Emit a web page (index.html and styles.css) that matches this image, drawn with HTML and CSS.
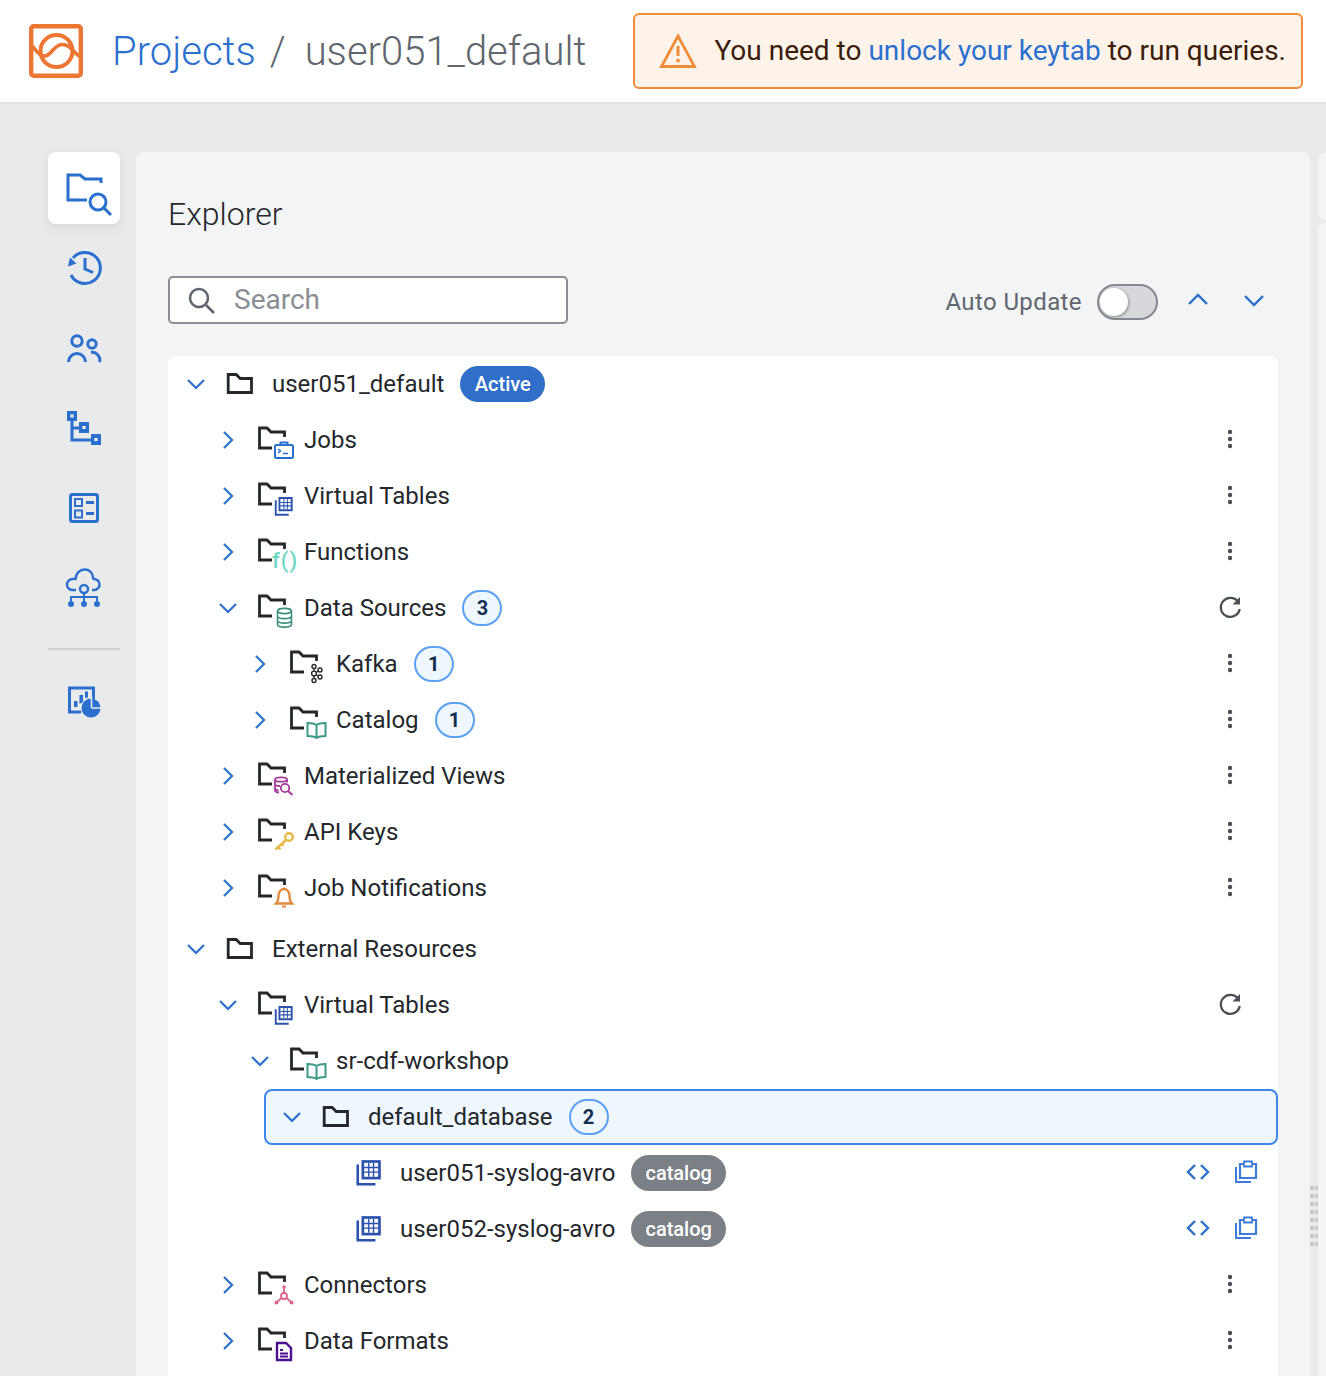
FILE: index.html
```html
<!DOCTYPE html>
<html lang="en">
<head>
  <meta charset="UTF-8">
  <title>Projects / user051_default</title>
  <link rel="stylesheet" href="styles.css">
</head>
<body>
  <!-- shared icons -->
  <svg class="sprite" width="0" height="0">
    <symbol id="chev-right" viewBox="0 0 24 24"><path d="M8 4l8 8-8 8"/></symbol>
    <symbol id="chev-down" viewBox="0 0 24 24"><path d="M4 8l8 8 8-8"/></symbol>
    <symbol id="folder" viewBox="0 0 32 32"><path d="M4.200 6.500h8l4 4h11.300v14H4.200z"/></symbol>
    <symbol id="folder-open" viewBox="0 0 40 40"><path d="M28.500 17v-5H15l-4-4H3.500v20H16" fill="none" stroke="#24282c" stroke-width="2.800"/></symbol>
    <symbol id="kebab" viewBox="0 0 32 32"><circle cx="16" cy="9" r="2.200"/><circle cx="16" cy="16" r="2.200"/><circle cx="16" cy="23" r="2.200"/></symbol>
    <symbol id="refresh" viewBox="0 0 32 32"><path d="M24.500 11.500a9.500 9.500 0 1 0 1.200 6.500" fill="none" stroke="#4a4f55" stroke-width="2.300"/><path d="M26 6v7.500h-7.500z" fill="#4a4f55"/></symbol>
    <symbol id="table" viewBox="0 0 28 28">
      <path d="M3.500 6v18.500H20" fill="none" stroke="#2a52ad" stroke-width="2.400"/>
      <path d="M7 2h18v18H7z" fill="#2a52ad"/>
      <path d="M9.500 4.500h13v13h-13z" fill="#fff"/>
      <path d="M13.800 4.500v13M18.200 4.500v13M9.500 8.800h13M9.500 13.200h13" stroke="#2a52ad" stroke-width="1.300"/>
    </symbol>
    <symbol id="book" viewBox="0 0 40 40">
      <path d="M28.500 25c-2-1.500-5-2-9-2v13c4 0 7 .5 9 2 2-1.500 5-2 9-2V23c-4 0-7 .5-9 2zM28.500 25v13" fill="none" stroke="#3d9a8b" stroke-width="2"/>
    </symbol>
    <symbol id="code" viewBox="0 0 24 24"><path d="M9 5l-7 7 7 7M15 5l7 7-7 7" fill="none" stroke="#2b6fcf" stroke-width="2.400"/></symbol>
    <symbol id="clip" viewBox="0 0 24 24">
      <path d="M2 7v15h15" fill="none" stroke="#3b7dd8" stroke-width="2"/>
      <path d="M10 4H6v14h16V4h-4" fill="none" stroke="#3b7dd8" stroke-width="2.200"/>
      <path d="M10 1.500h8v5h-8z" fill="none" stroke="#3b7dd8" stroke-width="1.800"/>
    </symbol>
  </svg>

  <!-- Header -->
  <header class="top-bar">
    <svg class="logo" width="54" height="54" viewBox="0 0 54 54">
      <rect x="2.200" y="2.200" width="49.600" height="49.600" rx="2.500" fill="none" stroke="#ec7632" stroke-width="4.400"/>
      <circle cx="27.500" cy="27" r="16" fill="none" stroke="#ec7632" stroke-width="4"/>
      <path d="M2.500 21.500C6 24 8 31 15 32c7 1 9-11 18-11.500 9-.5 12 9.500 19 12.500" fill="none" stroke="#ec7632" stroke-width="3.600"/>
    </svg>
    <div class="crumbs">
      <a href="#" class="crumb-link">Projects</a>
      <span class="crumb-sep">/</span>
      <span class="crumb-current">user051_default</span>
    </div>
    <div class="alert">
      <svg width="38" height="36" viewBox="0 0 38 36">
        <path d="M19 3L2.500 33.500h33z" fill="none" stroke="#ef8c38" stroke-width="2.800"/>
        <path d="M17.500 13h3v10h-3z" fill="#ef8c38"/>
        <circle cx="19" cy="27.500" r="1.900" fill="#ef8c38"/>
      </svg>
      <span class="alert-text">You need to <a href="#">unlock your keytab</a> to run queries.</span>
    </div>
  </header>

  <div class="main">
    <!-- Sidebar -->
    <nav class="side-nav">
      <a href="#" class="nav-item active">
        <svg width="48" height="48" viewBox="-4 -4 48 48" class="nav-svg">
          <path d="M37 15v-4H21l-5-4H4v25h19"/>
          <circle cx="34" cy="34" r="8"/>
          <path d="M40 40l7 7"/>
        </svg>
      </a>
      <a href="#" class="nav-item">
        <svg width="40" height="40" viewBox="0 0 40 40" class="nav-svg">
          <path d="M9 10A15.500 15.500 0 1 1 7 27"/>
          <path d="M21 10v11l8 3.500"/>
          <path d="M4 18.500l8.500-3-6.500-6z" class="fill no-stroke"/>
        </svg>
      </a>
      <a href="#" class="nav-item">
        <svg width="40" height="40" viewBox="0 0 40 40" class="nav-svg">
          <circle cx="13" cy="13" r="5.200"/>
          <path d="M4.500 34a8.500 8.500 0 0 1 17 0"/>
          <circle cx="28" cy="16" r="4.200"/>
          <path d="M27 24.500a7.500 7.500 0 0 1 8.500 9.500"/>
        </svg>
      </a>
      <a href="#" class="nav-item">
        <svg width="40" height="40" viewBox="0 0 40 40" class="nav-svg">
          <path d="M8 8v24h20M8 20h10"/>
          <path d="M3 3h10v10H3zM15 14h10v11H15zM27 26h10v11H27z" class="fill no-stroke"/>
          <path d="M6.500 6.500h3v3h-3zM18.500 18h3v3h-3zM30.500 30h3v3h-3z" class="hole"/>
        </svg>
      </a>
      <a href="#" class="nav-item">
        <svg width="40" height="40" viewBox="0 0 40 40" class="nav-svg">
          <rect x="6.500" y="6.500" width="27" height="27" rx="2"/>
          <path d="M11 11h7v7h-7zM11 22.500h7v7h-7z" class="thin"/>
          <path d="M22 14.500h8M22 25.500h8"/>
        </svg>
      </a>
      <a href="#" class="nav-item">
        <svg width="40" height="40" viewBox="0 0 40 40" class="nav-svg thin-all">
          <path d="M12 22H9a5.500 5.500 0 0 1-1-11c1-.2 2-.2 3.500 0C12 4 17 1.500 21 1.500c4 0 7.500 3 8 8 .2 1 .2 1.500 .5 1.500a5.500 5.500 0 0 1 1 11H28"/>
          <circle cx="20" cy="21" r="4"/>
          <path d="M7 36v-7h26v7M20 25v11" class="thin"/>
          <circle cx="7" cy="36" r="3" class="fill no-stroke"/>
          <circle cx="20" cy="36" r="3" class="fill no-stroke"/>
          <circle cx="33" cy="36" r="3" class="fill no-stroke"/>
        </svg>
      </a>
      <hr class="nav-divider">
      <a href="#" class="nav-item">
        <svg width="40" height="40" viewBox="0 0 40 40" class="nav-svg">
          <path d="M17 32H5.500V8h24v11"/>
          <path d="M10 27v-6h3.500v6zM15.500 24v-9H19v7zM21 18v-6.500h3v6z" class="fill no-stroke"/>
          <circle cx="27" cy="28" r="9.500" class="fill no-stroke"/>
          <path d="M27.500 28v-11.500M27.500 28h11" class="knock"/>
        </svg>
      </a>
    </nav>

    <!-- Explorer -->
    <section class="panel">
      <h1 class="panel-title">Explorer</h1>
      <div class="toolbar">
        <label class="search">
          <svg width="32" height="32" viewBox="0 0 32 32"><circle cx="14" cy="14" r="9"/><path d="M21 21l8 8"/></svg>
          <input type="text" placeholder="Search">
        </label>
        <span class="auto-label">Auto Update</span>
        <span class="toggle"><span class="knob"></span></span>
        <svg class="tool-arrow" width="24" height="24"><path d="M3 16l9-9 9 9"/></svg>
        <svg class="tool-arrow" width="24" height="24"><path d="M3 8l9 9 9-9"/></svg>
      </div>

      <div class="tree">
        <div class="row lv0">
          <svg class="chev"><use href="#chev-down"/></svg>
          <svg class="folder"><use href="#folder"/></svg>
          <span class="name">user051_default</span>
          <span class="pill active-pill">Active</span>
        </div>

        <div class="row lv1">
          <svg class="chev"><use href="#chev-right"/></svg>
          <svg class="sub" viewBox="0 0 40 40"><use href="#folder-open"/>
            <rect x="19" y="25" width="18" height="13" rx="1.500" fill="none" stroke="#2b6fcf" stroke-width="2"/>
            <path d="M24.500 25v-2.500h7V25" fill="none" stroke="#2b6fcf" stroke-width="2"/>
            <path d="M22 29l2.500 2-2.500 2M27 33.500h5" fill="none" stroke="#2b6fcf" stroke-width="1.500"/>
          </svg>
          <span class="name">Jobs</span>
          <span class="act"><svg class="act-icon"><use href="#kebab"/></svg></span>
        </div>

        <div class="row lv1">
          <svg class="chev"><use href="#chev-right"/></svg>
          <svg class="sub" viewBox="0 0 40 40"><use href="#folder-open"/><use href="#table" x="17" y="19.500" width="22" height="22"/></svg>
          <span class="name">Virtual Tables</span>
          <span class="act"><svg class="act-icon"><use href="#kebab"/></svg></span>
        </div>

        <div class="row lv1">
          <svg class="chev"><use href="#chev-right"/></svg>
          <svg class="sub" viewBox="0 0 40 40"><use href="#folder-open"/>
            <text x="16" y="36" class="fn-text">f()</text>
          </svg>
          <span class="name">Functions</span>
          <span class="act"><svg class="act-icon"><use href="#kebab"/></svg></span>
        </div>

        <div class="row lv1">
          <svg class="chev"><use href="#chev-down"/></svg>
          <svg class="sub" viewBox="0 0 40 40"><use href="#folder-open"/>
            <g fill="none" stroke="#3d8f7f" stroke-width="1.600">
              <ellipse cx="28.500" cy="23" rx="7" ry="2.600"/>
              <path d="M21.500 23v13.500c0 1.500 3 2.600 7 2.600s7-1.100 7-2.600V23M21.500 28c0 1.500 3 2.600 7 2.600s7-1.100 7-2.600M21.500 32.500c0 1.500 3 2.600 7 2.600s7-1.100 7-2.600"/>
            </g>
          </svg>
          <span class="name">Data Sources</span>
          <span class="count">3</span>
          <span class="act"><svg class="act-icon"><use href="#refresh"/></svg></span>
        </div>

        <div class="row lv2">
          <svg class="chev"><use href="#chev-right"/></svg>
          <svg class="sub" viewBox="0 0 40 40"><use href="#folder-open"/>
            <g fill="none" stroke="#24282c" stroke-width="1.400">
              <circle cx="26" cy="22.500" r="2"/>
              <circle cx="26" cy="29.500" r="2.400"/>
              <circle cx="26" cy="36.500" r="2"/>
              <circle cx="32" cy="26" r="2"/>
              <circle cx="32" cy="33" r="2"/>
              <path d="M28 28.500l2.300-1.500M28 30.500l2.300 1.500M26 24.500v2.500M26 32v2.500"/>
            </g>
          </svg>
          <span class="name">Kafka</span>
          <span class="count">1</span>
          <span class="act"><svg class="act-icon"><use href="#kebab"/></svg></span>
        </div>

        <div class="row lv2">
          <svg class="chev"><use href="#chev-right"/></svg>
          <svg class="sub" viewBox="0 0 40 40"><use href="#folder-open"/><use href="#book"/></svg>
          <span class="name">Catalog</span>
          <span class="count">1</span>
          <span class="act"><svg class="act-icon"><use href="#kebab"/></svg></span>
        </div>

        <div class="row lv1">
          <svg class="chev"><use href="#chev-right"/></svg>
          <svg class="sub" viewBox="0 0 40 40"><use href="#folder-open"/>
            <g fill="none" stroke="#a3399b" stroke-width="1.800">
              <ellipse cx="25" cy="23.500" rx="6" ry="2.200"/>
              <path d="M19 23.500v11c0 1 1.500 1.800 4 2M19 28c0 1 2 2 5 2M19 32.500c0 1 1.500 1.500 3.500 1.700M31 23.500v3"/>
              <circle cx="29" cy="32" r="4.200"/>
              <path d="M32 35l4.500 4" stroke-width="2"/>
            </g>
          </svg>
          <span class="name">Materialized Views</span>
          <span class="act"><svg class="act-icon"><use href="#kebab"/></svg></span>
        </div>

        <div class="row lv1">
          <svg class="chev"><use href="#chev-right"/></svg>
          <svg class="sub" viewBox="0 0 40 40"><use href="#folder-open"/>
            <g fill="none" stroke="#e8b84a" stroke-width="2.400">
              <circle cx="33" cy="25" r="3.800"/>
              <path d="M30 28L19.500 37.500M21.500 34.500l3 3M25 31.500l2.500 2.500"/>
            </g>
          </svg>
          <span class="name">API Keys</span>
          <span class="act"><svg class="act-icon"><use href="#kebab"/></svg></span>
        </div>

        <div class="row lv1">
          <svg class="chev"><use href="#chev-right"/></svg>
          <svg class="sub" viewBox="0 0 40 40"><use href="#folder-open"/>
            <path d="M20 35.500c2-2 2.500-4 2.500-8a5.500 6.500 0 0 1 11 0c0 4 .5 6 2.500 8zM28 21v-1.500" fill="none" stroke="#e08a3e" stroke-width="2.400"/>
            <path d="M26 37.500h4v2h-4z" fill="#e08a3e"/>
          </svg>
          <span class="name">Job Notifications</span>
          <span class="act"><svg class="act-icon"><use href="#kebab"/></svg></span>
        </div>

        <div class="row lv0 group-start">
          <svg class="chev"><use href="#chev-down"/></svg>
          <svg class="folder"><use href="#folder"/></svg>
          <span class="name">External Resources</span>
        </div>

        <div class="row lv1">
          <svg class="chev"><use href="#chev-down"/></svg>
          <svg class="sub" viewBox="0 0 40 40"><use href="#folder-open"/><use href="#table" x="17" y="19.500" width="22" height="22"/></svg>
          <span class="name">Virtual Tables</span>
          <span class="act"><svg class="act-icon"><use href="#refresh"/></svg></span>
        </div>

        <div class="row lv2">
          <svg class="chev"><use href="#chev-down"/></svg>
          <svg class="sub" viewBox="0 0 40 40"><use href="#folder-open"/><use href="#book"/></svg>
          <span class="name">sr-cdf-workshop</span>
        </div>

        <div class="row lv3 selected">
          <svg class="chev"><use href="#chev-down"/></svg>
          <svg class="folder"><use href="#folder"/></svg>
          <span class="name">default_database</span>
          <span class="count">2</span>
        </div>

        <div class="row lv4">
          <svg class="table-icon"><use href="#table"/></svg>
          <span class="name">user051-syslog-avro</span>
          <span class="pill tag-pill">catalog</span>
          <span class="act leaf-act">
            <svg class="leaf-icon"><use href="#code"/></svg>
            <svg class="leaf-icon"><use href="#clip"/></svg>
          </span>
        </div>

        <div class="row lv4">
          <svg class="table-icon"><use href="#table"/></svg>
          <span class="name">user052-syslog-avro</span>
          <span class="pill tag-pill">catalog</span>
          <span class="act leaf-act">
            <svg class="leaf-icon"><use href="#code"/></svg>
            <svg class="leaf-icon"><use href="#clip"/></svg>
          </span>
        </div>

        <div class="row lv1">
          <svg class="chev"><use href="#chev-right"/></svg>
          <svg class="sub" viewBox="0 0 40 40"><use href="#folder-open"/>
            <g fill="none" stroke="#d9668f" stroke-width="1.800">
              <circle cx="28" cy="31" r="3"/>
              <path d="M28 28v-6M25.500 33L21 37M30.500 33l4.500 4"/>
            </g>
            <g fill="#d9668f"><circle cx="28" cy="22" r="1.800"/><circle cx="20.500" cy="37.500" r="2"/><circle cx="35.500" cy="37.500" r="2"/></g>
          </svg>
          <span class="name">Connectors</span>
          <span class="act"><svg class="act-icon"><use href="#kebab"/></svg></span>
        </div>

        <div class="row lv1">
          <svg class="chev"><use href="#chev-right"/></svg>
          <svg class="sub" viewBox="0 0 40 40"><use href="#folder-open"/>
            <path d="M21 22h9l5 5v12H21z" fill="none" stroke="#4b0f8f" stroke-width="2.400"/>
            <path d="M24 29h3M24 32.500h8M24 35.500h8" stroke="#4b0f8f" stroke-width="1.800"/>
          </svg>
          <span class="name">Data Formats</span>
          <span class="act"><svg class="act-icon"><use href="#kebab"/></svg></span>
        </div>
      </div>
    </section>

    <div class="handle"><div class="handle-dots"></div></div>

    <!-- Side column, cut off by the window -->
    <aside class="right-col">
      <div class="right-card small"></div>
      <div class="right-card"></div>
    </aside>
  </div>
</body>
</html>
```

FILE: styles.css
```css
* {
  margin: 0;
  padding: 0;
  box-sizing: border-box;
}

html, body {
  height: 100%;
  overflow: hidden;
}

body {
  display: flex;
  flex-direction: column;
  font-family: 'Roboto', sans-serif;
  background-color: #e9eaec;
  color: #24282c;
}

a {
  text-decoration: none;
}

.sprite {
  position: absolute;
}

/* Header */
.top-bar {
  display: flex;
  align-items: center;
  flex: 0 0 102px;
  padding: 0 23px 0 29px;
  background-color: #fff;
  box-shadow: 0 1px 3px rgba(0, 0, 0, 0.08);
  z-index: 2;
}

.logo {
  flex: none;
}

.crumbs {
  display: flex;
  align-items: baseline;
  margin-left: 29px;
  font-size: 40px;
  font-weight: 300;
  white-space: nowrap;
}

.crumb-link {
  color: #2b6fcf;
}

.crumb-sep {
  margin: 0 19px 0 14px;
  color: #5f666d;
}

.crumb-current {
  color: #5f666d;
}

.alert {
  display: flex;
  align-items: center;
  gap: 17px;
  height: 76px;
  margin-left: auto;
  padding: 0 15px 0 24px;
  background-color: #fdf3e8;
  border: 2px solid #ef8c38;
  border-radius: 6px;
  font-size: 28px;
  color: #3a1d0a;
  white-space: nowrap;
}

.alert svg {
  flex: none;
}

.alert-text {
  margin-bottom: 2px;
}

.alert a {
  color: #2b6fcf;
}

/* Layout */
.main {
  display: flex;
  flex: 1;
  min-height: 0;
  padding: 50px 0 0 48px;
}

/* Sidebar */
.side-nav {
  display: flex;
  flex-direction: column;
  flex: 0 0 72px;
  gap: 8px;
  margin-right: 16px;
}

.nav-item {
  display: flex;
  align-items: center;
  justify-content: center;
  flex: 0 0 72px;
}

.nav-item.active {
  background-color: #fff;
  border-radius: 8px;
  box-shadow: 0 4px 12px rgba(0, 0, 0, 0.08);
}

.nav-svg {
  overflow: visible;
  fill: none;
  stroke: #2b6fcf;
  stroke-width: 3;
}

.nav-svg .fill {
  fill: #2b6fcf;
}

.nav-svg .no-stroke {
  stroke: none;
}

.nav-svg .hole {
  fill: #fff;
  stroke: none;
}

.nav-svg .thin {
  stroke-width: 2;
}

.nav-svg .knock {
  stroke: #e9eaec;
  stroke-width: 1.5;
}

.thin-all {
  stroke-width: 2.400;
}

.nav-divider {
  flex: none;
  height: 2px;
  margin: 16px 0 6px;
  border: none;
  background-color: #cfd0d3;
}

/* Explorer panel */
.panel {
  flex: 0 0 1174px;
  padding: 0 32px;
  background-color: #f3f4f6;
  border-radius: 8px 8px 0 0;
  overflow: hidden;
}

.panel-title {
  margin-top: 43px;
  font-size: 32px;
  line-height: 38px;
  font-weight: 300;
  color: #24282c;
}

.toolbar {
  display: flex;
  align-items: center;
  height: 48px;
  margin-top: 43px;
}

.search {
  display: flex;
  align-items: center;
  gap: 17px;
  width: 400px;
  height: 48px;
  padding-left: 15px;
  background-color: #fff;
  border: 2px solid #8a8e94;
  border-radius: 5px;
}

.search svg {
  flex: none;
  fill: none;
  stroke: #5f666d;
  stroke-width: 2.600;
}

.search input {
  width: 300px;
  padding-bottom: 2px;
  border: none;
  outline: none;
  background: transparent;
  font-family: 'Roboto', sans-serif;
  font-size: 28px;
}

.search input::placeholder {
  color: #8a8e94;
  opacity: 1;
}

.auto-label {
  margin: 4px 0 0 auto;
  font-size: 24px;
  letter-spacing: 0.4px;
  color: #5f666d;
}

.toggle {
  display: flex;
  align-items: center;
  width: 61px;
  height: 36px;
  margin: 4px 28px 0 15px;
  padding-left: 1px;
  background-color: #d6d8dc;
  border: 2px solid #858a90;
  border-radius: 18px;
}

.knob {
  width: 28px;
  height: 28px;
  background-color: #fff;
  border-radius: 50%;
  box-shadow: 1px 1px 3px rgba(0, 0, 0, 0.35);
}

.tool-arrow {
  flex: none;
  fill: none;
  stroke: #2b6fcf;
  stroke-width: 2.400;
}

.tool-arrow + .tool-arrow {
  margin: 0 12px 0 32px;
}

/* Tree */
.tree {
  display: flow-root;
  height: 1100px;
  margin-top: 32px;
  background-color: #fff;
  border-radius: 8px 8px 0 0;
}

.row {
  display: flex;
  align-items: center;
  height: 56px;
  font-size: 24px;
  white-space: nowrap;
}

.lv0 { padding-left: 16px; }
.lv1 { padding-left: 48px; }
.lv2 { padding-left: 80px; }
.lv3 { padding-left: 112px; }
.lv4 { padding-left: 186px; }

.group-start {
  margin-top: 5px;
}

.row.selected {
  margin-left: 96px;
  padding-left: 14px;
  background-color: #eef6fe;
  border: 2px solid #3d87ea;
  border-radius: 8px;
}

.chev {
  flex: none;
  width: 24px;
  height: 24px;
  fill: none;
  stroke: #2b6fcf;
  stroke-width: 2.200;
}

.folder {
  flex: none;
  width: 32px;
  height: 32px;
  margin: 0 16px;
  fill: none;
  stroke: #24282c;
  stroke-width: 2.800;
}

.sub {
  flex: none;
  width: 40px;
  height: 40px;
  margin: 0 8px 0 16px;
  overflow: visible;
}

.table-icon {
  flex: none;
  width: 30px;
  height: 30px;
  margin: 0 16px 0 0;
}

.name {
  line-height: 32px;
}

.pill {
  display: inline-flex;
  align-items: center;
  height: 36px;
  margin-left: 16px;
  padding: 0 14.500px;
  border-radius: 18px;
  font-size: 20px;
  font-weight: 500;
  color: #fff;
}

.active-pill {
  background-color: #2f6fc9;
}

.tag-pill {
  padding: 0 14px;
  background-color: #7b8087;
}

.count {
  display: inline-flex;
  align-items: center;
  justify-content: center;
  width: 40px;
  height: 36px;
  margin-left: 16px;
  background-color: #eef6fe;
  border: 2px solid #5ba0f2;
  border-radius: 18px;
  font-size: 20px;
  font-weight: 700;
  color: #14304f;
}

.act {
  display: flex;
  align-items: center;
  margin: 0 0 2px auto;
  padding-right: 32px;
}

.act-icon {
  width: 32px;
  height: 32px;
  fill: #4a4f55;
}

.leaf-act {
  gap: 24px;
  padding-right: 20px;
}

.leaf-icon {
  width: 24px;
  height: 24px;
}

.fn-text {
  font-family: 'Roboto', sans-serif;
  font-size: 22px;
  font-weight: 500;
  letter-spacing: 1px;
  fill: #6fd6c0;
}

/* Resize handle */
.handle {
  flex: 0 0 8px;
}

.handle-dots {
  width: 8px;
  height: 60px;
  margin-top: 1034px;
  background:
    linear-gradient(90deg, transparent 4px, #e9eaec 4px, #e9eaec 5px, transparent 5px),
    repeating-linear-gradient(#c8c9cc 0 4px, transparent 4px 8px);
}

/* Right column */
.right-col {
  display: flex;
  flex-direction: column;
  flex: 1;
  gap: 2px;
}

.right-card {
  flex: 1;
  background-color: #f3f4f6;
  border-radius: 8px 0 0 0;
}

.right-card.small {
  flex: 0 0 68px;
  border-radius: 8px 0 0 8px;
}
```
